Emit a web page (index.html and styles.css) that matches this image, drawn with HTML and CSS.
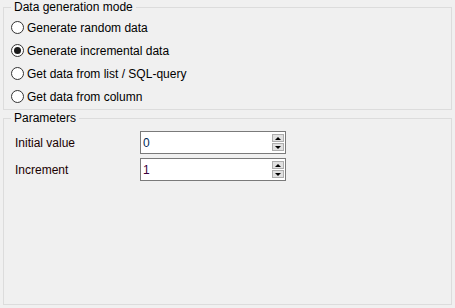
FILE: index.html
```html
<!DOCTYPE html>
<html>
<head>
<meta charset="utf-8">
<link rel="stylesheet" href="styles.css">
</head>
<body>
<div class="page">
  <fieldset class="group modes">
    <legend>Data generation mode</legend>
    <div class="opts">
      <label class="opt"><input type="radio" name="m"><span>Generate random data</span></label>
      <label class="opt"><input type="radio" name="m" checked><span>Generate incremental data</span></label>
      <label class="opt"><input type="radio" name="m"><span>Get data from list / SQL-query</span></label>
      <label class="opt"><input type="radio" name="m"><span>Get data from column</span></label>
    </div>
  </fieldset>
  <fieldset class="group params">
    <legend>Parameters</legend>
    <div class="grid">
      <span class="lbl">Initial value</span>
      <div class="spin"><span class="val">0</span><div class="btns"><span class="btn up"></span><span class="btn down"></span></div></div>
      <span class="lbl">Increment</span>
      <div class="spin"><span class="val v1">1</span><div class="btns"><span class="btn up"></span><span class="btn down"></span></div></div>
    </div>
  </fieldset>
</div>
</body>
</html>
```
FILE: styles.css
```css
html, body {
  margin: 0;
  padding: 0;
  background: #f0f0f0;
}
body {
  font-family: "Liberation Sans", Arial, sans-serif;
  font-size: 12px;
  color: #000;
}
.page {
  height: 308px;
  box-sizing: border-box;
  display: flex;
  flex-direction: column;
  padding: 0 3px 3px 3px;
}
.group {
  margin: 0;
  border: 1px solid #dcdcdc;
  min-width: 0;
  padding: 0;
}
.group legend {
  margin-left: 7px;
  padding: 0 3px 0 3px;
  line-height: 14px;
  height: 14px;
}
.modes {
  padding: 2px 0 1px 0;
}
.opts {
  padding-left: 7px;
}
.opt {
  display: flex;
  align-items: center;
  height: 23px;
}
.opt input {
  appearance: none;
  -webkit-appearance: none;
  margin: 0 3px 0 0;
  width: 13px;
  height: 13px;
  border: 1px solid #333;
  border-radius: 50%;
  background: #fff;
  box-sizing: border-box;
  display: grid;
  place-items: center;
}
.opt input:checked::after {
  content: "";
  width: 7px;
  height: 7px;
  border-radius: 50%;
  background: #1a1a1a;
}
.params {
  margin-top: 1px;
  flex: 1;
  padding: 6px 0 0 0;
}
.grid {
  display: grid;
  grid-template-columns: 125px 146px;
  grid-auto-rows: 23px;
  row-gap: 4px;
  align-items: center;
  padding-left: 11px;
}
.lbl {
  color: #1a0000;
}
.spin {
  height: 23px;
  box-sizing: border-box;
  border: 1px solid #7a7a7a;
  background: #fff;
  display: flex;
  align-items: center;
  justify-content: space-between;
  padding: 0 1px 0 2px;
}
.val {
  color: #002a55;
}
.val.v1 {
  color: #3a003a;
}
.btns {
  display: flex;
  flex-direction: column;
  gap: 1px;
}
.btn {
  width: 12px;
  height: 8px;
  box-sizing: border-box;
  border: 1px solid #adadad;
  background: #e1e1e1;
  display: grid;
  place-items: center;
}
.btn::after {
  content: "";
  width: 0;
  height: 0;
  border-left: 3px solid transparent;
  border-right: 3px solid transparent;
}
.btn.up::after {
  border-bottom: 3px solid #000;
}
.btn.down::after {
  border-top: 3px solid #000;
}
```
